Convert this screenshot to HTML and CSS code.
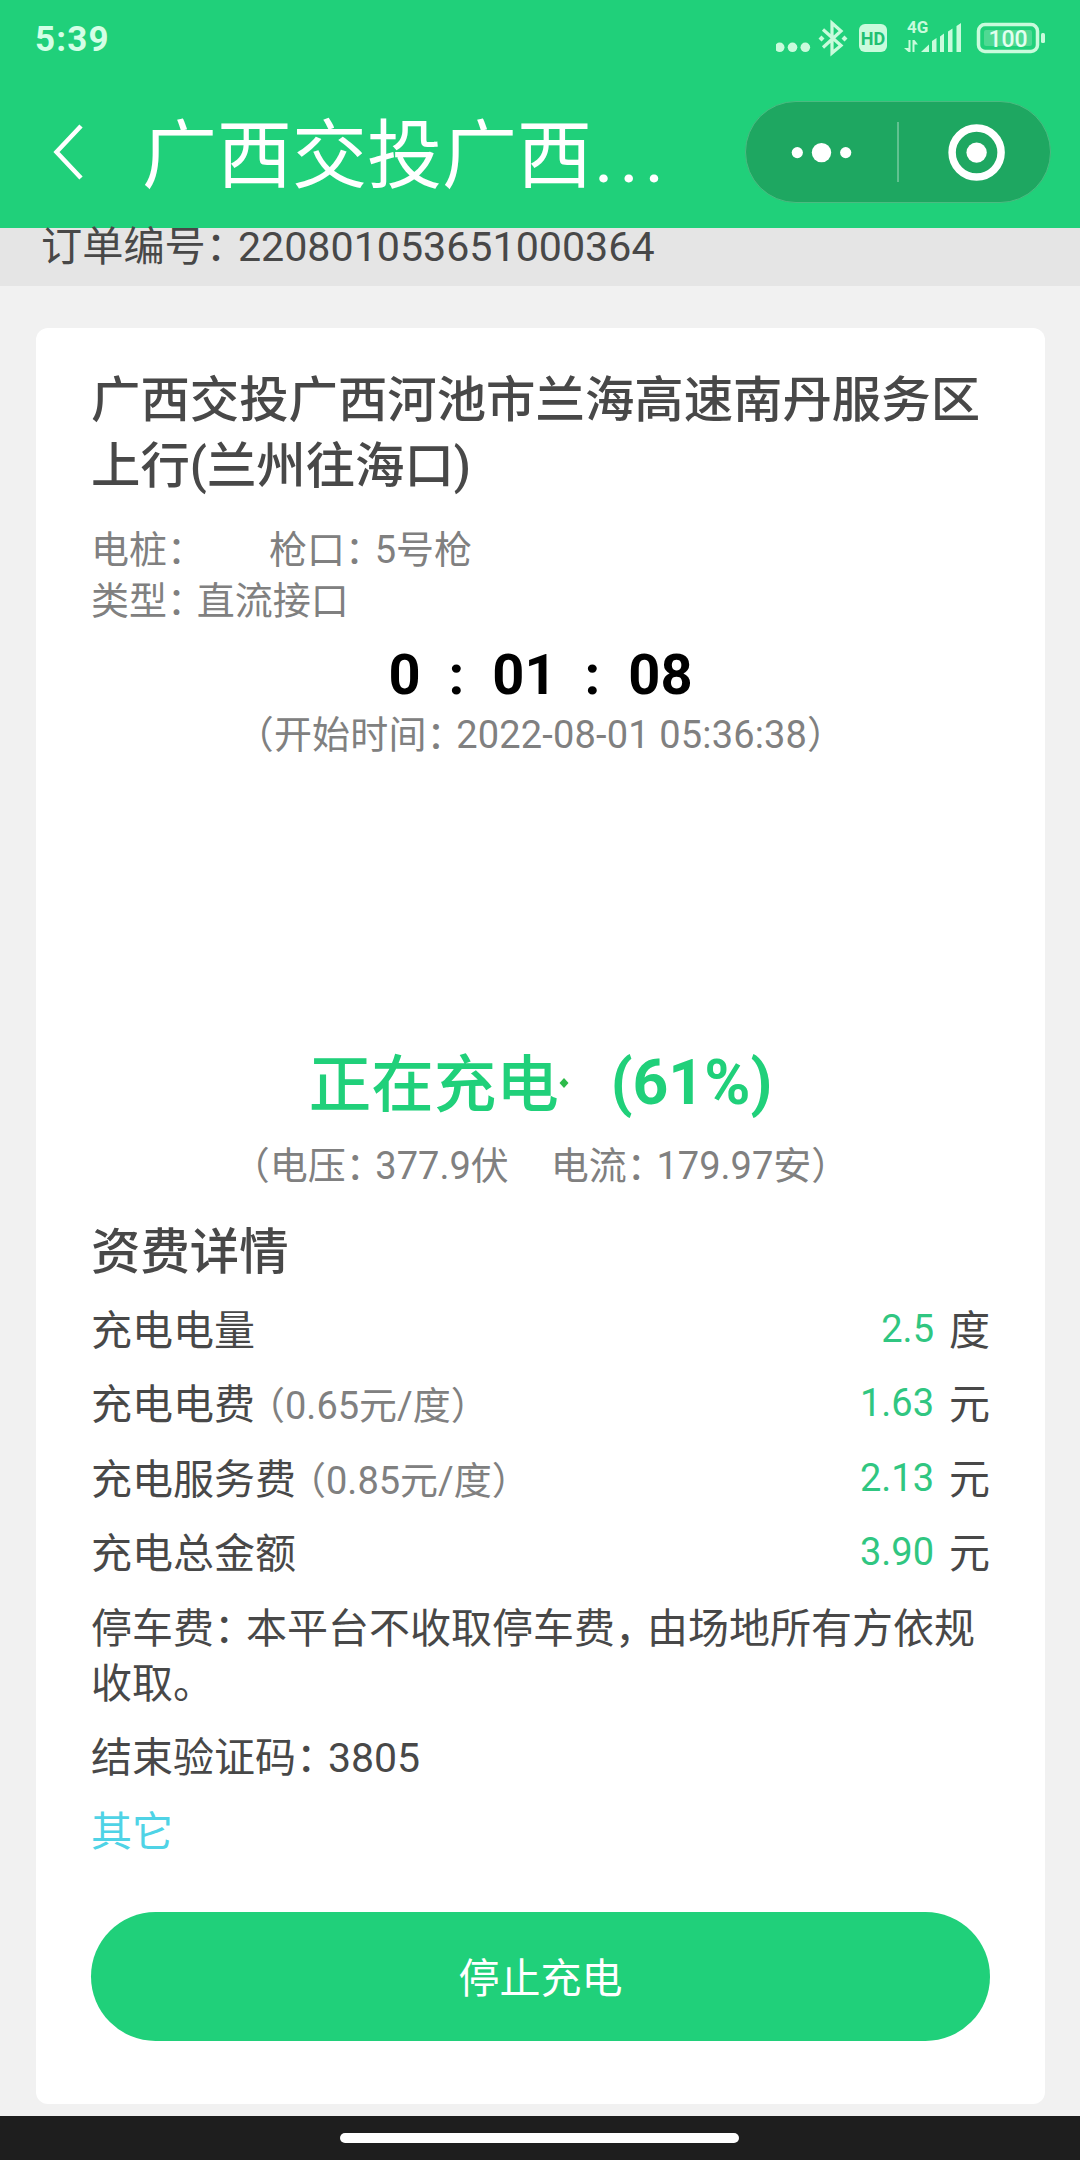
FILE: index.html
```html
<!DOCTYPE html>
<html lang="zh-CN">
<head>
  <meta charset="UTF-8">
  <meta name="viewport" content="width=device-width, initial-scale=1.0">
  <title>正在充电</title>
  <link rel="stylesheet" href="styles.css">
</head>
<body>
  <header>
    <div class="status-bar">
      <span class="clock">5:39</span>
      <svg class="status-icons" width="270" height="40" viewBox="776 18 270 40">
        <g fill="#c9fbdc">
          <circle cx="779.7" cy="47.3" r="4.8"/>
          <circle cx="792.5" cy="47.3" r="4.8"/>
          <circle cx="805.3" cy="47.3" r="4.8"/>
          <!-- bluetooth -->
          <path d="M823 29.5 L841 45.5 L832 53 V23 L841 31 L823 47.5" fill="none" stroke="#c9fbdc" stroke-width="3.2"/>
          <path d="M821.5 35.5 l3 3 -3 3 -3 -3zM844.5 35.5 l3 3 -3 3 -3 -3z"/>
          <rect x="859" y="24" width="28" height="28" rx="6"/>
          <text class="hd" x="873" y="45" text-anchor="middle">HD</text>
          <text class="net" x="907" y="33">4G</text>
          <!-- data arrows -->
          <path d="M908.5 40 h2 v12 h-2 l-4.5 -4 h4.5zM912.5 40 h2 l3.5 4.5 h-3.5 v7.5 h-2z"/>
          <!-- signal -->
          <path d="M921 52 L929 44.5 V52z"/>
          <path d="M932 41 l4.5 -3 V52 h-4.5zM940 36.5 l4 -3 V52 h-4zM948 31.5 l4.5 -3 V52 h-4.5zM956.5 26 l4.5 -3 V52 h-4.5z"/>
          <rect x="978.5" y="24.5" width="59" height="27" rx="6.5" fill="none" stroke="#c9fbdc" stroke-width="3.5"/>
          <rect x="984" y="30" width="48" height="16" rx="2" fill="#4fd993"/>
          <rect x="1041" y="33" width="4" height="10" rx="1.5"/>
          <text class="level" x="1008" y="46.5" text-anchor="middle">100</text>
        </g>
      </svg>
    </div>
    <div class="nav-bar">
      <svg class="back" width="32" height="60" viewBox="0 0 32 60">
        <path d="M30 4 L5.5 30 L30 56" fill="none" stroke="#fff" stroke-width="4.5"/>
      </svg>
      <h1>广西交投广西<span class="dots">...</span></h1>
      <div class="capsule">
        <svg width="304" height="100" viewBox="746 102 304 100">
          <g fill="#fff">
            <circle cx="797.3" cy="152.6" r="5.6"/>
            <circle cx="821.5" cy="152.6" r="9.7"/>
            <circle cx="845.7" cy="152.6" r="5.6"/>
            <rect x="897" y="122" width="2" height="60" opacity=".3"/>
            <circle cx="976.6" cy="152.6" r="24.5" fill="none" stroke="#fff" stroke-width="7.5"/>
            <circle cx="976.6" cy="152.6" r="10.2"/>
          </g>
        </svg>
      </div>
    </div>
  </header>

  <div class="order">订单编号<i class="colon">：</i>220801053651000364</div>

  <main>
    <section class="card">
      <h2 class="station">广西交投广西河池市兰海高速南丹服务区上行(兰州往海口)</h2>
      <div class="info">
        <div><span class="pile">电桩<i class="colon">：</i></span>枪口<i class="colon">：</i>5号枪</div>
        <div>类型<i class="colon">：</i>直流接口</div>
      </div>

      <div class="timer">
        <span>0</span><span>:</span><span>01</span><span>:</span><span>08</span>
      </div>
      <div class="start"><i>（</i>开始时间<i class="colon">：</i>2022-08-01 05:36:38<i>）</i></div>

      <div class="charging">
        <span class="state">正在充电</span>
        <svg width="10" height="12" viewBox="0 0 10 12"><path d="M5 1 L9.5 6 L5 11 L.5 6z" fill="#2dba4a"/></svg>
        <span class="percent">(61%)</span>
      </div>
      <div class="power"><i>（</i>电压<i class="colon">：</i>377.9伏<span class="current">电流<i class="colon">：</i>179.97安</span><i>）</i></div>

      <h2 class="fee-title">资费详情</h2>
      <div class="row"><span>充电电量</span><span class="value"><b>2.5</b>度</span></div>
      <div class="row"><span>充电电费<small><i>（</i>0.65元/度<i>）</i></small></span><span class="value"><b>1.63</b>元</span></div>
      <div class="row"><span>充电服务费<small><i>（</i>0.85元/度<i>）</i></small></span><span class="value"><b>2.13</b>元</span></div>
      <div class="row"><span>充电总金额</span><span class="value"><b>3.90</b>元</span></div>
      <p class="row">停车费<i class="colon">：</i>本平台不收取停车费<i class="colon">，</i>由场地所有方依规收取。</p>
      <div class="row code">结束验证码<i class="colon">：</i>3805</div>
      <a class="row other">其它</a>

      <button type="button">停止充电</button>
    </section>
  </main>

  <footer><div class="home-bar"></div></footer>
</body>
</html>
```
FILE: styles.css
```css
* {
  box-sizing: border-box;
}

body {
  display: flex;
  flex-direction: column;
  width: 1080px;
  height: 2160px;
  margin: 0;
  overflow: hidden;
  font-family: Roboto, "Noto Sans CJK SC", sans-serif;
  font-size: 41px;
  color: #484848;
  background-color: #f1f1f1;
}

h1, h2, p {
  margin: 0;
}

/* half-width punctuation */
i {
  font-style: normal;
  font-feature-settings: "halt";
}

.colon {
  margin-right: 0.28em;
}

/* header */
header {
  flex: none;
  height: 228px;
  background-color: #20d07a;
}

.status-bar {
  display: flex;
  justify-content: space-between;
  height: 76px;
  padding: 18px 34px 0 35px;
}

.clock {
  font-size: 35px;
  line-height: 43px;
  font-weight: 700;
  letter-spacing: 1.2px;
  color: #d3ffe6;
}

.hd {
  font-size: 18px;
  font-weight: 700;
  fill: #20c072;
}

.net {
  font-size: 17px;
  font-weight: 700;
}

.level {
  font-size: 23px;
  font-weight: 500;
  fill: #e3ffef;
}

.nav-bar {
  display: flex;
  align-items: center;
  height: 152px;
  padding: 0 29px 0 51px;
}

h1 {
  flex: 1;
  margin-left: 59px;
  padding-top: 7px;
  font-size: 75px;
  line-height: 100px;
  font-weight: 400;
  white-space: nowrap;
  color: #fff;
}

.dots {
  margin-left: 2px;
  letter-spacing: 5.5px;
}

.capsule {
  width: 306px;
  height: 102px;
  border: 1px solid #4bbb81;
  border-radius: 51px;
  background-color: #1ea761;
}

.capsule svg {
  display: block;
}

.order {
  flex: none;
  height: 58px;
  padding-left: 41px;
  font-size: 41.2px;
  line-height: 39px;
  background-color: #e5e5e5;
}

/* card */
main {
  flex: 1;
  padding: 42px 35px 0 36px;
}

.card {
  height: 1776px;
  padding: 39px 55px 0;
  border-radius: 12px;
  background-color: #fff;
}

h2 {
  font-size: 49.4px;
  line-height: 66px;
  font-weight: 500;
}

.station {
  margin-right: -10px;
}

.info {
  margin-top: 26px;
  font-size: 38px;
  line-height: 51px;
  color: #808080;
}

.pile {
  display: inline-block;
  width: 178px;
}

.timer {
  display: flex;
  justify-content: center;
  gap: 28px;
  margin-top: 15px;
  font-size: 56px;
  line-height: 66px;
  font-weight: 700;
  color: #000;
}

.start, .power {
  font-size: 38px;
  line-height: 50px;
  text-align: center;
  color: #808080;
}

.start {
  margin-top: 2px;
  letter-spacing: 0.15px;
}

.charging {
  display: flex;
  align-items: center;
  justify-content: center;
  margin-top: 279px;
  font-size: 62.5px;
  line-height: 80px;
  font-weight: 500;
  color: #20d07a;
}

.state {
  padding-top: 7px;
}

.percent {
  margin-left: 42px;
  font-weight: 700;
}

.power {
  margin-top: 15px;
}

.current {
  margin-left: 42px;
}

.fee-title {
  margin: 28px 0 19px;
}

.row {
  display: flex;
  justify-content: space-between;
  margin-bottom: 19.4px;
  line-height: 55px;
  white-space: nowrap;
}

p.row {
  display: block;
  white-space: normal;
}

.code {
  justify-content: flex-start;
}

small {
  margin-left: 11px;
  font-size: 38px;
  line-height: 1;
  color: #808080;
}

.value b {
  margin-right: 15px;
  font-size: 38px;
  line-height: 1;
  font-weight: 400;
  vertical-align: 3px;
  color: #30c681;
}

.other {
  color: #4fd3e6;
}

button {
  display: block;
  width: 899px;
  height: 129px;
  margin-top: 52px;
  padding: 0 0 4px;
  border: none;
  border-radius: 65px;
  font: inherit;
  color: #fff;
  background-color: #20d07a;
}

/* gesture area */
footer {
  flex: none;
  display: flex;
  justify-content: center;
  height: 44px;
  padding: 17px 1px 0 0;
  background-color: #1e1e1e;
}

.home-bar {
  width: 399px;
  height: 10px;
  border-radius: 5px;
  background-color: #fff;
}
```
